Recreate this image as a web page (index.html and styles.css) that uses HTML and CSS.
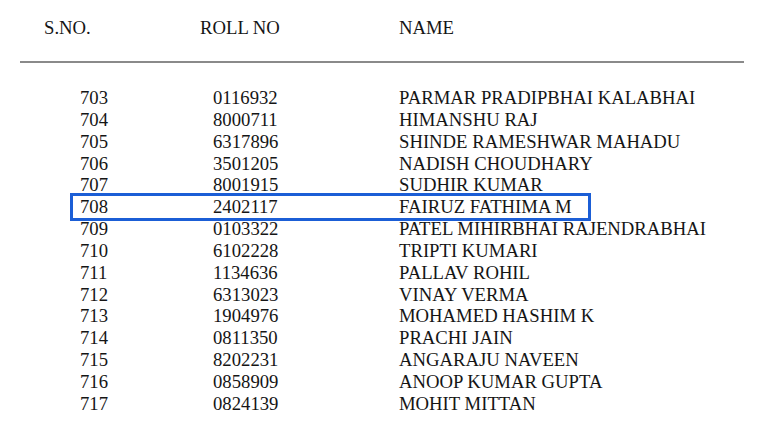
FILE: index.html
```html
<!DOCTYPE html>
<html>
<head>
<meta charset="utf-8">
<link rel="stylesheet" href="styles.css">
</head>
<body>
<div class="sheet">
  <div class="row head">
    <div class="c1">S.NO.</div>
    <div class="c2">ROLL NO</div>
    <div class="c3">NAME</div>
  </div>
  <div class="rule"></div>
  <div class="list">
    <div class="row"><div class="c1">703</div><div class="c2">0116932</div><div class="c3">PARMAR PRADIPBHAI KALABHAI</div></div>
    <div class="row"><div class="c1">704</div><div class="c2">8000711</div><div class="c3">HIMANSHU RAJ</div></div>
    <div class="row"><div class="c1">705</div><div class="c2">6317896</div><div class="c3">SHINDE RAMESHWAR MAHADU</div></div>
    <div class="row"><div class="c1">706</div><div class="c2">3501205</div><div class="c3">NADISH CHOUDHARY</div></div>
    <div class="row"><div class="c1">707</div><div class="c2">8001915</div><div class="c3">SUDHIR KUMAR</div></div>
    <div class="row marked"><div class="c1">708</div><div class="c2">2402117</div><div class="c3">FAIRUZ FATHIMA M</div></div>
    <div class="row"><div class="c1">709</div><div class="c2">0103322</div><div class="c3">PATEL MIHIRBHAI RAJENDRABHAI</div></div>
    <div class="row"><div class="c1">710</div><div class="c2">6102228</div><div class="c3">TRIPTI KUMARI</div></div>
    <div class="row"><div class="c1">711</div><div class="c2">1134636</div><div class="c3">PALLAV ROHIL</div></div>
    <div class="row"><div class="c1">712</div><div class="c2">6313023</div><div class="c3">VINAY VERMA</div></div>
    <div class="row"><div class="c1">713</div><div class="c2">1904976</div><div class="c3">MOHAMED HASHIM K</div></div>
    <div class="row"><div class="c1">714</div><div class="c2">0811350</div><div class="c3">PRACHI JAIN</div></div>
    <div class="row"><div class="c1">715</div><div class="c2">8202231</div><div class="c3">ANGARAJU NAVEEN</div></div>
    <div class="row"><div class="c1">716</div><div class="c2">0858909</div><div class="c3">ANOOP KUMAR GUPTA</div></div>
    <div class="row"><div class="c1">717</div><div class="c2">0824139</div><div class="c3">MOHIT MITTAN</div></div>
  </div>
</div>
</body>
</html>
```

FILE: styles.css
```css
html, body {
  margin: 0;
  padding: 0;
  background: #ffffff;
}

.sheet {
  font-family: "Liberation Serif", "Times New Roman", serif;
  font-size: 18.7px;
  color: #151515;
  padding-top: 17px;
}

.row {
  display: grid;
  grid-template-columns: 156px 199px 1fr;
  margin-left: 44px;
  line-height: 21.85px;
  height: 21.85px;
  white-space: nowrap;
}

.head {
  line-height: 22px;
  height: 22px;
}

.rule {
  margin: 22px 24px 0 20px;
  height: 2px;
  background: #8a8a8a;
}

.list {
  padding-top: 24px;
}

.list .c1 {
  padding-left: 36px;
}

.list .c2 {
  padding-left: 13px;
}

.marked {
  position: relative;
}

.marked::after {
  content: "";
  position: absolute;
  left: 26px;
  width: 515px;
  top: -3px;
  bottom: -3px;
  border: 3px solid #1b5ed6;
}
```
